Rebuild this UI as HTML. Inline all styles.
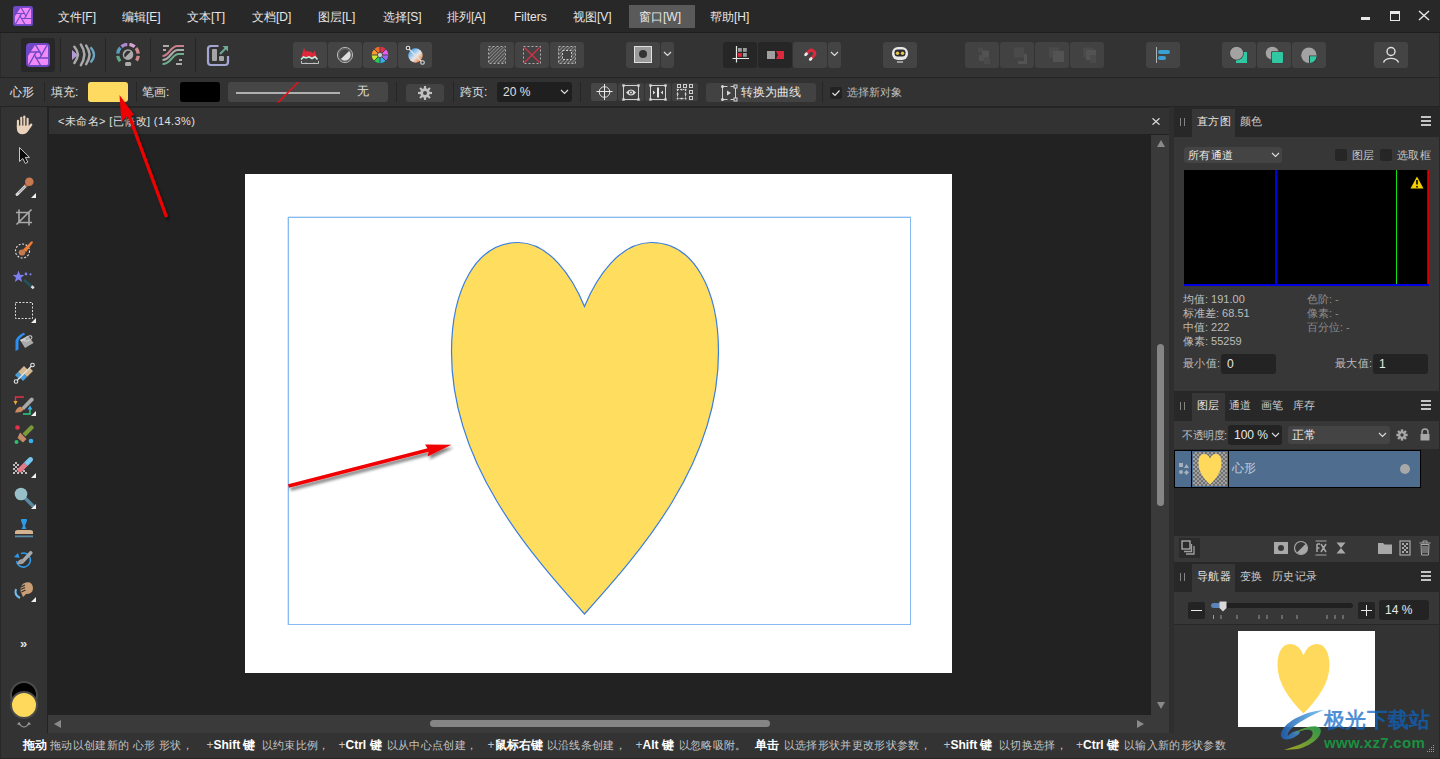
<!DOCTYPE html>
<html><head><meta charset="utf-8">
<style>
*{box-sizing:border-box;margin:0;padding:0}
html,body{width:1440px;height:759px;overflow:hidden;background:#222;font-family:"Liberation Sans",sans-serif;color:#ddd}
.a{position:absolute}
.t{position:absolute;white-space:nowrap;line-height:1}
.btn{position:absolute;background:#444;border-radius:3px}
.sep{position:absolute;width:1px;background:#242424}
</style></head><body>
<!-- MENU BAR -->
<div class="a" style="left:0;top:0;width:1440px;height:32px;background:#282828"></div>
<div class="a" style="left:0;top:32px;width:1440px;height:1px;background:#1e1e1e"></div>
<svg class="a" style="left:13px;top:6px" width="20" height="20" viewBox="0 0 24 24"><defs><clipPath id="lc3"><rect x="2" y="2" width="20" height="20" rx="1.5"/></clipPath></defs><rect x="0" y="0" width="24" height="24" rx="3" fill="#6e47c4"/><g clip-path="url(#lc3)"><rect x="2" y="2" width="20" height="20" fill="#ef8af8"/><path d="M2 2H9L2 13Z" fill="#6e47c4"/><path d="M13.35 15.67L22.60 -0.36" stroke="#6e47c4" stroke-width="1.3"/><path d="M9.50 15.00L28.00 15.00" stroke="#6e47c4" stroke-width="1.3"/><path d="M8.15 11.33L17.40 27.36" stroke="#6e47c4" stroke-width="1.3"/><path d="M10.65 8.33L1.40 24.36" stroke="#6e47c4" stroke-width="1.3"/><path d="M14.50 9.00L-4.00 9.00" stroke="#6e47c4" stroke-width="1.3"/><path d="M15.85 12.67L6.60 -3.36" stroke="#6e47c4" stroke-width="1.3"/></g></svg>
<div id="menu" style="font-size:12px;color:#e6e6e6">
<span class="t" style="left:58px;top:11px">文件[F]</span>
<span class="t" style="left:122px;top:11px">编辑[E]</span>
<span class="t" style="left:187px;top:11px">文本[T]</span>
<span class="t" style="left:252px;top:11px">文档[D]</span>
<span class="t" style="left:318px;top:11px">图层[L]</span>
<span class="t" style="left:383px;top:11px">选择[S]</span>
<span class="t" style="left:447px;top:11px">排列[A]</span>
<span class="t" style="left:514px;top:11px">Filters</span>
<span class="t" style="left:573px;top:11px">视图[V]</span>
<div class="a" style="left:629px;top:5px;width:66px;height:23px;background:#5a5a5a"></div>
<span class="t" style="left:639px;top:11px">窗口[W]</span>
<span class="t" style="left:710px;top:11px">帮助[H]</span>
</div>
<!-- window controls -->
<div class="a" style="left:1361px;top:17px;width:9px;height:3px;background:#e8e8e8"></div>
<div class="a" style="left:1390px;top:11px;width:10px;height:10px;border:1px solid #e8e8e8;border-top-width:3px"></div>
<svg class="a" style="left:1418px;top:10px" width="12" height="11"><path d="M1 1L11 10M11 1L1 10" stroke="#e8e8e8" stroke-width="1.4"/></svg>

<!-- TOOLBAR -->
<div class="a" style="left:0;top:33px;width:1440px;height:44px;background:#333"></div>
<div class="a" style="left:0;top:33px;width:1px;height:44px;background:#2a2a2a"></div>
<div class="a" style="left:1439px;top:33px;width:1px;height:44px;background:#2a2a2a"></div>
<div class="a" style="left:0;top:77px;width:1440px;height:1px;background:#242424"></div>


<!-- TOOLBAR ITEMS -->
<div class="a" style="left:21px;top:38px;width:34px;height:34px;background:#272727;border-radius:3px"></div>
<svg class="a" style="left:26px;top:43px" width="24" height="24" viewBox="0 0 24 24"><defs><clipPath id="lc4"><rect x="2" y="2" width="20" height="20" rx="1.5"/></clipPath></defs><rect x="0" y="0" width="24" height="24" rx="4" fill="#6e47c4"/><g clip-path="url(#lc4)"><rect x="2" y="2" width="20" height="20" fill="#ef8af8"/><path d="M2 2H9L2 13Z" fill="#6e47c4"/><path d="M13.35 15.67L22.60 -0.36" stroke="#6e47c4" stroke-width="1.3"/><path d="M9.50 15.00L28.00 15.00" stroke="#6e47c4" stroke-width="1.3"/><path d="M8.15 11.33L17.40 27.36" stroke="#6e47c4" stroke-width="1.3"/><path d="M10.65 8.33L1.40 24.36" stroke="#6e47c4" stroke-width="1.3"/><path d="M14.50 9.00L-4.00 9.00" stroke="#6e47c4" stroke-width="1.3"/><path d="M15.85 12.67L6.60 -3.36" stroke="#6e47c4" stroke-width="1.3"/></g></svg>
<div class="sep" style="left:60px;top:38px;height:34px"></div>
<svg class="a" style="left:71px;top:43px" width="25" height="24" viewBox="0 0 25 24">
<path d="M1 6.9L6.8 11.9L1 16.9Z" fill="#b39bd9"/>
<path d="M3.4 3.8Q6.5 7.5 7 11.6Q6.5 15.8 3.4 20M9.9 1.6Q12.9 6 13.4 11.6Q12.9 17.5 9.9 22.2M15.2 2.6Q18.2 7 18.6 11.6Q18.2 16.5 15.2 21.1" stroke="#a9a9a9" stroke-width="2.5" fill="none" stroke-linecap="round" stroke-linejoin="round"/>
<path d="M19.5 4.2Q26.5 11.9 19.5 19.6" stroke="#6ba6c2" stroke-width="2.2" fill="none"/>
</svg>
<div class="sep" style="left:105px;top:38px;height:34px"></div>
<svg class="a" style="left:116px;top:43px" width="24" height="24" viewBox="0 0 24 24"><g fill="none" stroke-width="3.3"><path d="M1.74 10.70A10.3 10.3 0 0 1 4.35 4.71" stroke="#5b9bc0"/><path d="M5.52 3.60A10.3 10.3 0 0 1 11.28 1.33" stroke="#b08ad0"/><path d="M13.43 1.40A10.3 10.3 0 0 1 18.62 3.71" stroke="#d8a2d8"/><path d="M20.00 5.12A10.3 10.3 0 0 1 22.26 10.70" stroke="#d0888f"/><path d="M22.22 12.86A10.3 10.3 0 0 1 20.44 17.51" stroke="#d0888f"/><path d="M4.11 18.22A10.3 10.3 0 0 1 1.78 12.86" stroke="#62a98a"/></g><circle cx="12" cy="11.6" r="5.3" fill="#ababab"/><path d="M8.9 14.4L14.7 8.6A4.2 4.2 0 0 0 8.9 14.4Z" fill="#333"/><rect x="9" y="18.9" width="6.2" height="4.1" rx="1.6" fill="#ababab"/></svg>
<div class="sep" style="left:150px;top:38px;height:34px"></div>
<svg class="a" style="left:161px;top:43px" width="24" height="24" viewBox="0 0 24 24">
<path d="M1.5 13C8.5 13 9 3 16.5 3H23" stroke="#c8808a" stroke-width="2.2" fill="none"/>
<path d="M1.5 17C9.5 17 10 7 17 7H23" stroke="#ababab" stroke-width="2.2" fill="none"/>
<path d="M1.5 21C10.5 21 11 11 17.5 11H23" stroke="#6cae8e" stroke-width="2.2" fill="none"/>
<path d="M2 3H8M2 7H5M18 17H21M15 21H21" stroke="#ababab" stroke-width="2"/>
</svg>
<div class="sep" style="left:195px;top:38px;height:34px"></div>
<svg class="a" style="left:206px;top:43px" width="24" height="24" viewBox="0 0 24 24">
<path d="M12.5 3H5A3 3 0 0 0 2 6V19A3 3 0 0 0 5 22H19A3 3 0 0 0 22 19V17" stroke="#a3a6d2" stroke-width="2.2" fill="none"/>
<path d="M22 19V13" stroke="#a3a6d2" stroke-width="2.2"/>
<rect x="6" y="6" width="5" height="12" rx="1" fill="#a5a5a5"/>
<rect x="13" y="13" width="5" height="5" rx="1" fill="#a5a5a5"/>
<path d="M14 11L20.5 4.5" stroke="#6dab95" stroke-width="2"/>
<path d="M16.5 3H22V8.5Z" fill="#6dab95"/>
</svg>

<div class="btn" style="left:293px;top:42px;width:34px;height:26px"></div>
<div class="btn" style="left:328px;top:42px;width:34px;height:26px"></div>
<div class="btn" style="left:363px;top:42px;width:34px;height:26px"></div>
<div class="btn" style="left:398px;top:42px;width:34px;height:26px"></div>
<svg class="a" style="left:300px;top:46px" width="20" height="20" viewBox="0 0 20 20">
<path d="M1.5 11.5L2.5 7L4 1.5L5.5 6L7.5 4.5L9 6L11 5.5L13 7.5L14.5 4.5L16 9L17 12L14 11L11 12.5L8 11L5 12L2 11Z" fill="#e0283b"/>
<path d="M1 13.5L3.5 11L6 12L9 10.8L12 12.5L15 10.8L17.5 13.5" stroke="#bff2e2" stroke-width="1.6" fill="none"/>
<path d="M1.5 15V17.5H18.5V15M6 16.5V17.5M14 16.5V17.5" stroke="#cfcfcf" stroke-width="0.9" fill="none"/>
</svg>
<svg class="a" style="left:336px;top:46px" width="18" height="18" viewBox="0 0 18 18">
<circle cx="9" cy="9" r="7.6" stroke="#b8b8b8" stroke-width="1" fill="none"/>
<circle cx="9" cy="9" r="6.3" stroke="#8a8a8a" stroke-width="0.6" fill="none"/>
<path d="M13.1 4.9A5.8 5.8 0 0 1 4.9 13.1Z" fill="#dcdcdc"/>
</svg>
<svg class="a" style="left:370px;top:45px" width="20" height="20" viewBox="0 0 20 20">
<g transform="translate(10 10)">
<path d="M0 0L0 -8.3A8.3 8.3 0 0 1 5.87 -5.87Z" fill="#e3304a"/>
<path d="M0 0L5.87 -5.87A8.3 8.3 0 0 1 8.3 0Z" fill="#e85cf0"/>
<path d="M0 0L8.3 0A8.3 8.3 0 0 1 5.87 5.87Z" fill="#9a64f6"/>
<path d="M0 0L5.87 5.87A8.3 8.3 0 0 1 0 8.3Z" fill="#30b0f2"/>
<path d="M0 0L0 8.3A8.3 8.3 0 0 1 -5.87 5.87Z" fill="#28c85a"/>
<path d="M0 0L-5.87 5.87A8.3 8.3 0 0 1 -8.3 0Z" fill="#c8e830"/>
<path d="M0 0L-8.3 0A8.3 8.3 0 0 1 -5.87 -5.87Z" fill="#f89a30"/>
<path d="M0 0L-5.87 -5.87A8.3 8.3 0 0 1 0 -8.3Z" fill="#f06a28"/>
<path d="M0 -8.5V8.5M-8.5 0H8.5M-6 -6L6 6M6 -6L-6 6" stroke="#3e3e3e" stroke-width="0.9"/>
<circle r="2.6" fill="#cfcfcf" stroke="#3e3e3e" stroke-width="0.8"/>
</g>
</svg>
<svg class="a" style="left:405px;top:45px" width="20" height="20" viewBox="0 0 20 20">
<defs><linearGradient id="g1" x1="0" y1="0" x2="1" y2="1"><stop offset="0.1" stop-color="#3aa2f0"/><stop offset="0.55" stop-color="#e8e8e8"/><stop offset="0.9" stop-color="#f07830"/></linearGradient></defs>
<circle cx="10.5" cy="10.5" r="7.2" fill="url(#g1)"/>
<path d="M3 3L17.5 17.5" stroke="#e0e0e0" stroke-width="1.3"/>
<circle cx="3" cy="3" r="1.8" fill="#3e3e3e" stroke="#e0e0e0" stroke-width="1.1"/>
<circle cx="17.5" cy="17.5" r="1.8" fill="#3e3e3e" stroke="#e0e0e0" stroke-width="1.1"/>
<circle cx="10.25" cy="10.25" r="0.9" fill="#e0e0e0"/>
</svg>


<div class="btn" style="left:480px;top:42px;width:34px;height:26px;background:#434343"></div>
<div class="btn" style="left:515px;top:42px;width:34px;height:26px;background:#434343"></div>
<div class="btn" style="left:550px;top:42px;width:34px;height:26px;background:#434343"></div>
<svg class="a" style="left:487px;top:45px" width="20" height="20" viewBox="0 0 20 20">
<defs><pattern id="hatch" width="2.5" height="2.5" patternUnits="userSpaceOnUse" patternTransform="rotate(45)"><rect width="1.1" height="2.5" fill="#8a8a8a"/></pattern></defs>
<rect x="2" y="2" width="16" height="16" fill="url(#hatch)"/>
<rect x="1.5" y="1.5" width="17" height="17" fill="none" stroke="#b0b0b0" stroke-width="1" stroke-dasharray="2 2"/>
</svg>
<svg class="a" style="left:522px;top:45px" width="20" height="20" viewBox="0 0 20 20">
<rect x="1.5" y="1.5" width="17" height="17" fill="none" stroke="#b0b0b0" stroke-width="1" stroke-dasharray="2 2"/>
<path d="M2.5 2.5L17.5 17.5M17.5 2.5L2.5 17.5" stroke="#d83048" stroke-width="1.3"/>
</svg>
<svg class="a" style="left:557px;top:45px" width="20" height="20" viewBox="0 0 20 20">
<path d="M1.5 1.5H18.5V18.5H1.5Z M5 5V15H15V5Z" fill="url(#hatch)" fill-rule="evenodd"/>
<rect x="1.5" y="1.5" width="17" height="17" fill="none" stroke="#b0b0b0" stroke-width="1" stroke-dasharray="2 2"/>
<rect x="5.5" y="5.5" width="9" height="9" fill="none" stroke="#d0d0d0" stroke-width="1" stroke-dasharray="2 1.5"/>
</svg>

<div class="btn" style="left:626px;top:42px;width:34px;height:26px"></div>
<div class="btn" style="left:661px;top:42px;width:13px;height:26px"></div>
<div class="a" style="left:634px;top:46px;width:18px;height:17px;background:#9a9a9a;border:1.5px solid #e0e0e0"></div>
<div class="a" style="left:639px;top:50px;width:8px;height:8px;border-radius:50%;background:#333"></div>
<svg class="a" style="left:663px;top:51px" width="9" height="6"><path d="M1 1L4.5 4.5L8 1" stroke="#ddd" stroke-width="1.2" fill="none"/></svg>

<div class="btn" style="left:723px;top:42px;width:34px;height:26px;background:#262626"></div>
<div class="btn" style="left:758px;top:42px;width:34px;height:26px;background:#262626"></div>
<div class="btn" style="left:793px;top:42px;width:34px;height:26px"></div>
<div class="btn" style="left:828px;top:42px;width:13px;height:26px"></div>
<svg class="a" style="left:730px;top:44px" width="22" height="20" viewBox="0 0 22 20">
<rect x="8" y="4" width="3.8" height="3.8" fill="#9c9c9c"/><rect x="13" y="4" width="3.8" height="3.8" fill="#9c9c9c"/>
<rect x="8" y="9" width="3.8" height="3.8" fill="#e0283c"/><rect x="13" y="9" width="3.8" height="3.8" fill="#9c9c9c"/>
<path d="M6.5 2V18.5M2.5 14.5H19" stroke="#e8e8e8" stroke-width="1.2"/>
</svg>
<svg class="a" style="left:765px;top:48px" width="22" height="14" viewBox="0 0 22 14">
<rect x="2" y="3" width="8" height="8" fill="#a0a0a0"/>
<path d="M11 3H19V11H11L13 7Z" fill="#e0283c"/>
</svg>
<svg class="a" style="left:800px;top:44px" width="20" height="20" viewBox="0 0 20 20">
<path d="M6.9 9.43L9.17 7.17A3.3 3.3 0 0 1 13.83 11.83L11.57 14.1" stroke="#e0283c" stroke-width="3" fill="none"/>
<path d="M6.5 9.85L5.6 10.75M11.15 14.5L10.25 15.4" stroke="#eeeeee" stroke-width="2.8" stroke-linecap="round"/>
</svg>
<svg class="a" style="left:830px;top:51px" width="9" height="6"><path d="M1 1L4.5 4.5L8 1" stroke="#ddd" stroke-width="1.2" fill="none"/></svg>

<div class="btn" style="left:883px;top:42px;width:34px;height:26px"></div>
<svg class="a" style="left:890px;top:45px" width="20" height="20" viewBox="0 0 20 20">
<rect x="2" y="2" width="16" height="13" rx="6" fill="#e8e8e8"/>
<rect x="4.5" y="4.5" width="11" height="7" rx="3" fill="#2a2a30"/>
<circle cx="7.5" cy="8.2" r="1.7" fill="#e3c54e"/><circle cx="12.5" cy="8.2" r="1.7" fill="#e3c54e"/>
<rect x="7" y="16" width="6" height="2" fill="#9a9a9a"/>
</svg>

<div class="btn" style="left:965px;top:42px;width:34px;height:26px;background:#424242"></div>
<div class="btn" style="left:1000px;top:42px;width:34px;height:26px;background:#424242"></div>
<div class="btn" style="left:1035px;top:42px;width:34px;height:26px;background:#424242"></div>
<div class="btn" style="left:1070px;top:42px;width:34px;height:26px;background:#424242"></div>
<svg class="a" style="left:970px;top:45px" width="24" height="20" viewBox="0 0 24 20">
<rect x="8" y="2.5" width="5" height="5" fill="#4a4a4a"/><rect x="12" y="5.5" width="7" height="7" fill="#535353"/><rect x="9" y="10" width="6" height="6" fill="#505050"/><rect x="14" y="13" width="6" height="6" fill="#4a4a4a"/>
</svg>
<svg class="a" style="left:1005px;top:45px" width="24" height="20" viewBox="0 0 24 20">
<rect x="9" y="2.5" width="10" height="10" fill="#4a4a4a"/><path d="M19 9H22V19H13V16H19Z" fill="#535353"/>
</svg>
<svg class="a" style="left:1040px;top:45px" width="24" height="20" viewBox="0 0 24 20">
<rect x="9" y="2.5" width="10" height="10" fill="#4a4a4a"/><rect x="13" y="6" width="11" height="11" fill="#535353"/>
</svg>
<svg class="a" style="left:1075px;top:45px" width="24" height="20" viewBox="0 0 24 20">
<rect x="8" y="2.5" width="10" height="10" fill="#4a4a4a"/><rect x="11" y="5" width="10" height="10" fill="#535353"/><rect x="15" y="10" width="6" height="8" fill="#4a4a4a"/>
</svg>

<div class="btn" style="left:1146px;top:42px;width:34px;height:26px"></div>
<div class="a" style="left:1156px;top:47px;width:1px;height:16px;background:#b0b0b0"></div>
<div class="a" style="left:1158px;top:50px;width:12px;height:4px;border-radius:2px;background:#3a9fd2"></div>
<div class="a" style="left:1158px;top:56px;width:8px;height:4px;border-radius:2px;background:#3a9fd2"></div>

<div class="btn" style="left:1222px;top:42px;width:34px;height:26px"></div>
<div class="btn" style="left:1257px;top:42px;width:34px;height:26px"></div>
<div class="btn" style="left:1292px;top:42px;width:34px;height:26px"></div>
<svg class="a" style="left:1226px;top:44px" width="26" height="22" viewBox="0 0 26 22">
<rect x="10" y="8" width="11" height="11" fill="#2fc8a2"/>
<circle cx="10.6" cy="9.2" r="7.2" fill="#3e3e3e"/>
<circle cx="10.6" cy="9.2" r="6.5" fill="#a3a3a3"/>
</svg>
<svg class="a" style="left:1261px;top:44px" width="26" height="22" viewBox="0 0 26 22">
<circle cx="11.3" cy="9.2" r="6.5" fill="#a3a3a3"/>
<rect x="10.2" y="7.2" width="12.6" height="12.6" rx="1.2" fill="#3e3e3e"/>
<rect x="11" y="8" width="11" height="11" rx="1" fill="#2fc8a2"/>
</svg>
<svg class="a" style="left:1296px;top:44px" width="26" height="22" viewBox="0 0 26 22">
<circle cx="12.9" cy="11.2" r="7.7" fill="#a3a3a3"/>
<path d="M13 11.5H21V19H13Z" fill="#3e3e3e"/>
<path d="M14 12.3H20.6A7.7 7.7 0 0 1 14 18.9Z" fill="#2fc8a2"/>
</svg>

<div class="btn" style="left:1374px;top:42px;width:34px;height:26px"></div>
<svg class="a" style="left:1381px;top:45px" width="20" height="20" viewBox="0 0 20 20">
<circle cx="10" cy="6.5" r="4" stroke="#e0e0e0" stroke-width="1.4" fill="none"/>
<path d="M2.5 17.5C4.5 12 15.5 12 17.5 17.5" stroke="#e0e0e0" stroke-width="1.4" fill="none"/>
</svg>

<!-- CONTEXT BAR -->
<div class="a" style="left:0;top:78px;width:1440px;height:28px;background:#323232"></div>
<div class="a" style="left:0;top:106px;width:1440px;height:1px;background:#242424"></div>


<div style="font-size:12px;color:#e0e0e0">
<span class="t" style="left:10px;top:86px">心形</span>
<div class="sep" style="left:44px;top:82px;height:20px;background:#262626"></div>
<span class="t" style="left:51px;top:86px">填充:</span>
<div class="a" style="left:88px;top:82px;width:40px;height:20px;border-radius:3px;background:#fedb60"></div>
<div class="sep" style="left:136px;top:82px;height:20px;background:#262626"></div>
<span class="t" style="left:142px;top:86px">笔画:</span>
<div class="a" style="left:180px;top:82px;width:40px;height:20px;border-radius:3px;background:#000"></div>
<div class="a" style="left:228px;top:82px;width:160px;height:20px;border-radius:3px;background:#464646"></div>
<div class="a" style="left:236px;top:92px;width:104px;height:1.5px;background:#b0b0b0"></div>
<svg class="a" style="left:277px;top:81px" width="23" height="22"><path d="M1 21.5L21.5 1" stroke="#e8101a" stroke-width="1.6"/></svg>
<span class="t" style="left:357px;top:85px">无</span>
<div class="sep" style="left:396px;top:82px;height:20px;background:#262626"></div>
<div class="a" style="left:406px;top:84px;width:38px;height:18px;border-radius:3px;background:#434343"></div>
<svg class="a" style="left:417px;top:85px" width="16" height="16" viewBox="0 0 16 16">
<g transform="translate(8 8)" fill="#c0c0c0">
<circle r="4.8"/>
<rect x="-1.1" y="-7" width="2.2" height="14"/>
<rect x="-1.1" y="-7" width="2.2" height="14" transform="rotate(45)"/>
<rect x="-1.1" y="-7" width="2.2" height="14" transform="rotate(90)"/>
<rect x="-1.1" y="-7" width="2.2" height="14" transform="rotate(135)"/>
<circle r="2" fill="#434343"/>
</g>
</svg>
<div class="sep" style="left:453px;top:82px;height:20px;background:#262626"></div>
<span class="t" style="left:460px;top:86px">跨页:</span>
<div class="a" style="left:497px;top:82px;width:75px;height:20px;border-radius:3px;background:#1f1f1f"></div>
<span class="t" style="left:503px;top:86px">20 %</span>
<svg class="a" style="left:560px;top:89px" width="9" height="6"><path d="M1 1L4.5 4.5L8 1" stroke="#ddd" stroke-width="1.2" fill="none"/></svg>
<div class="sep" style="left:580px;top:82px;height:20px;background:#262626"></div>
<div class="a" style="left:591px;top:83px;width:26px;height:18px;border-radius:2px;background:#464646"></div>
<div class="a" style="left:618px;top:83px;width:26px;height:18px;border-radius:2px;background:#404040"></div>
<div class="a" style="left:645px;top:83px;width:26px;height:18px;border-radius:2px;background:#404040"></div>
<div class="a" style="left:672px;top:83px;width:26px;height:18px;border-radius:2px;background:#404040"></div>
<svg class="a" style="left:591px;top:83px" width="26" height="18" viewBox="0 0 26 18">
<circle cx="13.5" cy="9" r="5.3" stroke="#e0e0e0" stroke-width="1" fill="none"/>
<path d="M13.5 1V17M5.5 8.5H21.5" stroke="#e8e8e8" stroke-width="1"/>
</svg>
<svg class="a" style="left:618px;top:83px" width="26" height="18" viewBox="0 0 26 18">
<path d="M5.5 2.5H20.5V16.5H5.5Z" stroke="#d0d0d0" stroke-width="1" fill="none"/>
<rect x="4.3" y="1.3" width="2.4" height="2.4" fill="#d8d8d8"/><rect x="19.3" y="1.3" width="2.4" height="2.4" fill="#d8d8d8"/><rect x="4.3" y="15.3" width="2.4" height="2.4" fill="#d8d8d8"/><rect x="19.3" y="15.3" width="2.4" height="2.4" fill="#d8d8d8"/>
<path d="M8 9.5Q13 3.5 18 9.5Q13 15.5 8 9.5Z" fill="#e0e0e0"/><circle cx="13" cy="9.5" r="2" fill="#404040"/><circle cx="13" cy="9.5" r="1" fill="#e0e0e0"/>
</svg>
<svg class="a" style="left:645px;top:83px" width="26" height="18" viewBox="0 0 26 18">
<path d="M5.5 2.5H20.5V16.5H5.5Z" stroke="#d0d0d0" stroke-width="1" fill="none"/>
<rect x="4.3" y="1.3" width="2.4" height="2.4" fill="#d8d8d8"/><rect x="19.3" y="1.3" width="2.4" height="2.4" fill="#d8d8d8"/><rect x="4.3" y="15.3" width="2.4" height="2.4" fill="#d8d8d8"/><rect x="19.3" y="15.3" width="2.4" height="2.4" fill="#d8d8d8"/>
<rect x="12" y="4.5" width="2" height="10" fill="#e8e8e8"/><path d="M8 7.5V11.5L10.3 9.5Z M18 7.5V11.5L15.7 9.5Z" fill="#e0e0e0"/>
</svg>
<svg class="a" style="left:672px;top:83px" width="26" height="18" viewBox="0 0 26 18">
<g fill="none" stroke="#cfcfcf" stroke-width="1">
<rect x="5.5" y="1.5" width="3" height="3"/><rect x="11.5" y="1.5" width="3" height="3"/><rect x="17.5" y="1.5" width="3" height="3"/>
<rect x="17.5" y="7.5" width="3" height="3"/><rect x="17.5" y="13.5" width="3" height="3"/>
<rect x="5.5" y="6.5" width="8" height="9" stroke-dasharray="1.5 1.2"/>
</g>
<g fill="#d8d8d8"><rect x="4.8" y="5.8" width="1.6" height="1.6"/><rect x="12.8" y="5.8" width="1.6" height="1.6"/><rect x="4.8" y="14.8" width="1.6" height="1.6"/><rect x="12.8" y="14.8" width="1.6" height="1.6"/><rect x="8.8" y="5.8" width="1.6" height="1.6"/><rect x="8.8" y="14.8" width="1.6" height="1.6"/><rect x="4.8" y="10.3" width="1.6" height="1.6"/><rect x="12.8" y="10.3" width="1.6" height="1.6"/></g>
</svg>
<div class="a" style="left:706px;top:83px;width:110px;height:19px;border-radius:3px;background:#424242"></div>
<svg class="a" style="left:718px;top:83px" width="22" height="20" viewBox="0 0 22 20">
<path d="M4.5 3.5V16.5M4.5 3.5H9.5M4.5 16.5H9.5M17.5 3.5V16.5M17.5 3.5H12.5M17.5 16.5H12.5" stroke="#cfcfcf" stroke-width="1" fill="none"/>
<circle cx="4.5" cy="3.5" r="1.5" fill="#d8d8d8"/><circle cx="4.5" cy="16.5" r="1.5" fill="#d8d8d8"/>
<rect x="16" y="2" width="3" height="3" fill="#424242" stroke="#d8d8d8" stroke-width="1"/><rect x="16" y="15" width="3" height="3" fill="#424242" stroke="#d8d8d8" stroke-width="1"/>
<path d="M9 7.5V12.5L13 10Z" fill="#d8d8d8"/>
</svg>
<span class="t" style="left:741px;top:86px;color:#e8e8e8">转换为曲线</span>
<div class="sep" style="left:822px;top:82px;height:20px;background:#262626"></div>
<div class="a" style="left:830px;top:87px;width:12px;height:12px;border-radius:2px;background:#222"></div>
<svg class="a" style="left:831px;top:88px" width="10" height="10"><path d="M1.5 5L4 7.5L8.5 2.5" stroke="#e0e0e0" stroke-width="1.2" fill="none"/></svg>
<span class="t" style="left:847px;top:87px;color:#bdbdbd;font-size:11px">选择新对象</span>
</div>

<!-- TOOLS PANEL -->
<div class="a" style="left:0;top:107px;width:47px;height:626px;background:#333"></div>
<div class="a" style="left:47px;top:107px;width:2px;height:28px;background:#222"></div>

<svg class="a" style="left:12px;top:112px" width="24" height="24" viewBox="0 0 24 24"><g stroke="#ead2bb" stroke-width="2.3" stroke-linecap="round"><path d="M6 9V15M9.35 5.8V14M12.3 4.7V14M15.5 6.8V15"/></g><path d="M4.85 13.5V16.5Q5 22.3 10.5 22.3Q14 22.3 16.2 19L20.3 13.3A1.3 1.3 0 0 0 18.3 11.8L16.6 14.2V13.5Z" fill="#ead2bb"/><path d="M7.7 8V13.5M10.85 6V13.5M13.9 6V13.5" stroke="#323232" stroke-width="0.7"/></svg>
<svg class="a" style="left:12px;top:143px" width="24" height="24" viewBox="0 0 24 24"><path d="M7.5 4.5V18.5L10.8 15.5L13.3 20.5L15.8 19.2L13.3 14.4H17.5Z" fill="#0a0a0a" stroke="#c8c8c8" stroke-width="1" stroke-linejoin="round"/></svg>
<svg class="a" style="left:12px;top:174px" width="24" height="24" viewBox="0 0 24 24"><path d="M5 20.5L14.5 11" stroke="#d8d8d8" stroke-width="3" stroke-linecap="round"/><path d="M6.5 19L13 12.5" stroke="#8a8a8a" stroke-width="1"/><circle cx="17.3" cy="7.8" r="4.3" fill="#c97a52"/><path d="M13 10L15 12.5" stroke="#a05a38" stroke-width="2"/><path d="M24 19V24H19Z" fill="#f0f0f0"/></svg>
<svg class="a" style="left:12px;top:205px" width="24" height="24" viewBox="0 0 24 24"><path d="M7 4.5V17.5H20M4 7.5H17V20.5M4.5 19.5L19.5 4.5" stroke="#a9a9a9" stroke-width="1.6" fill="none"/></svg>
<svg class="a" style="left:12px;top:237px" width="24" height="24" viewBox="0 0 24 24"><circle cx="10.5" cy="14" r="7" stroke="#e6e6e6" stroke-width="1.1" stroke-dasharray="2 1.6" fill="none"/><path d="M11 12.5L19.5 4.2A1.5 1.5 0 0 1 21 5.5L14 15Z" fill="#f07d30"/><ellipse cx="10" cy="15.5" rx="3.3" ry="3" fill="#c47a50"/></svg>
<svg class="a" style="left:12px;top:267px" width="24" height="24" viewBox="0 0 24 24"><path d="M12 13L21.5 21" stroke="#24535e" stroke-width="2.6"/><path d="M19.5 19.3L21.8 21.3" stroke="#e0e0e0" stroke-width="2.6"/><path d="M6.5 3.5L8 7.8L12.3 8L9 10.8L10.2 15L6.5 12.6L2.8 15L4 10.8L0.8 8L5 7.8Z" fill="#7d7ff0"/><circle cx="14" cy="7" r="1.4" fill="#7d7ff0"/><circle cx="18.5" cy="7.3" r="1.1" fill="#7d7ff0"/></svg>
<svg class="a" style="left:12px;top:299px" width="24" height="24" viewBox="0 0 24 24"><rect x="3.5" y="3.5" width="17" height="16" stroke="#d8d8d8" stroke-width="1" stroke-dasharray="2 1.5" fill="none"/><path d="M24 19V24H19Z" fill="#f0f0f0"/></svg>
<svg class="a" style="left:12px;top:330px" width="24" height="24" viewBox="0 0 24 24"><path d="M3.5 21V10.5Q5 6 12 2.5L13 4.5Q8 7 6.5 11V19.5Z" fill="#2f8ff0"/><path d="M8 10L16.5 6L21.5 13L13 18Z" fill="#a9a9a9"/><path d="M8 10L12.5 8L14 9.5L9.5 11.5Z" fill="#d0d0d0"/><ellipse cx="16" cy="8.5" rx="4.2" ry="2" stroke="#cfcfcf" stroke-width="1" fill="none" transform="rotate(-25 16 8.5)"/></svg>
<svg class="a" style="left:12px;top:361px" width="24" height="24" viewBox="0 0 24 24"><path d="M6 11L12 5L16 9L10 15Z" fill="#d4b88f"/><path d="M3 14L6 11L10 15L7 18Z" fill="#4a9dd8"/><path d="M12 13L18 7L21 10L15 16Z" fill="#d4b88f"/><path d="M8 17L12 13L15 16L11 20Z" fill="#4a9dd8"/><path d="M4.5 20L20 4.5" stroke="#e6e6e6" stroke-width="1.2"/><circle cx="4" cy="20.5" r="1.8" fill="#333" stroke="#e6e6e6" stroke-width="1.1"/><circle cx="20.5" cy="4" r="1.8" fill="#333" stroke="#e6e6e6" stroke-width="1.1"/></svg>
<svg class="a" style="left:12px;top:392px" width="24" height="24" viewBox="0 0 24 24"><path d="M3.5 9.5V5H12" stroke="#e5324a" stroke-width="1.4" fill="none"/><path d="M1.5 9H5.5L3.5 13Z" fill="#f0a830"/><path d="M9 16L18.5 6A2 2 0 0 1 21.5 8.5L12 18Z" fill="#a9a9a9"/><path d="M3 20.5Q4.5 15.5 8.5 14.5L11.5 17.5Q10 21 3 20.5Z" fill="#c98a62"/><path d="M11 22H18V17" stroke="#28d088" stroke-width="1.4" fill="none"/><path d="M15.5 17.5H20.5L18 13.5Z" fill="#38b0f0"/><path d="M24 19V24H19Z" fill="#f0f0f0"/></svg>
<svg class="a" style="left:12px;top:423px" width="24" height="24" viewBox="0 0 24 24"><path d="M10.5 10.5L18.5 2.5A2.3 2.3 0 0 1 21.5 5.5L13.5 13.5Z" fill="#7a9a3c"/><path d="M8 9.5L14.5 16L11 19.5L5.5 15Z" fill="#c48c68"/><circle cx="5.5" cy="4.5" r="2.3" fill="#e5324a"/><circle cx="4.5" cy="19" r="2" fill="#2ec070"/><circle cx="19" cy="18" r="2.3" fill="#38b0f0"/></svg>
<svg class="a" style="left:12px;top:454px" width="24" height="24" viewBox="0 0 24 24"><g fill="#bdbdbd"><rect x="1" y="10" width="2" height="2"/><rect x="5" y="10" width="2" height="2"/><rect x="3" y="12" width="2" height="2"/><rect x="1" y="14" width="2" height="2"/><rect x="5" y="14" width="2" height="2"/><rect x="3" y="16" width="2" height="2"/><rect x="7" y="16" width="2" height="2"/><rect x="1" y="18" width="2" height="2"/><rect x="5" y="18" width="2" height="2"/><rect x="9" y="18" width="2" height="2"/><rect x="3" y="8" width="2" height="2"/><rect x="13" y="18" width="2" height="2"/><rect x="11" y="16" width="2" height="2"/></g><path d="M6 14.5L12 8.5L15.5 12L9.5 18A2.5 2.5 0 0 1 6 14.5Z" fill="#e47a88"/><path d="M12 8.5L17 3.5A2.5 2.5 0 0 1 20.5 7L15.5 12Z" fill="#78c8f0"/><path d="M24 19V24H19Z" fill="#f0f0f0"/></svg>
<svg class="a" style="left:12px;top:485px" width="24" height="24" viewBox="0 0 24 24"><path d="M12.5 12.5L20.5 20.5" stroke="#5a8aa4" stroke-width="3.5" stroke-linecap="round"/><circle cx="9" cy="9" r="6.3" fill="#98c0c8"/><path d="M24 19V24H19Z" fill="#f0f0f0"/></svg>
<svg class="a" style="left:12px;top:516px" width="24" height="24" viewBox="0 0 24 24"><path d="M9.5 3.5H14.5V6L13 10L14.5 13H9.5L11 10L9.5 6Z" fill="#2c9ae8"/><rect x="9" y="3" width="6" height="2.5" rx="1" fill="#2c9ae8"/><path d="M3 16Q3 14 6 14H18Q21 14 21 16V18H3Z" fill="#d4b48e"/><rect x="3" y="19.5" width="18" height="1.8" fill="#5a8aa4"/></svg>
<svg class="a" style="left:12px;top:547px" width="24" height="24" viewBox="0 0 24 24"><path d="M4.5 14A7 7 0 1 0 9 6.5" stroke="#2c9ae8" stroke-width="1.6" fill="none"/><path d="M2 10L6 6L7.5 11Z" fill="#2c9ae8"/><path d="M10 12.5L18 4A2 2 0 0 1 20.5 6.5L12.5 15Z" fill="#a9a9a9"/><path d="M5 17Q6 12.5 10 12L12.5 14.5Q12 18 5 17Z" fill="#a0a0a0"/></svg>
<svg class="a" style="left:12px;top:578px" width="24" height="24" viewBox="0 0 24 24"><path d="M9 14L15 8" stroke="#c9a07a" stroke-width="0"/><path d="M8.5 13Q8 6 14 4.5Q20.5 3.5 21 10Q21 16 14 16L11 19Z" fill="#c99e76"/><path d="M9 9L13 7M8.5 11.5L13 9.5M9.5 14L13.5 12" stroke="#303030" stroke-width="1.2"/><path d="M4 11Q2 17 8 20" stroke="#6ec0f0" stroke-width="2" fill="none"/><path d="M24 19V24H19Z" fill="#f0f0f0"/></svg>
<span class="t" style="left:20px;top:637px;font-size:13px;color:#e0e0e0;font-weight:bold">»</span>
<div class="a" style="left:10px;top:681px;width:28px;height:28px;border-radius:50%;background:#000;border:2px solid #4a4a4a"></div>
<div class="a" style="left:10px;top:691px;width:28px;height:28px;border-radius:50%;background:#fed95c;border:2px solid #4a4a4a"></div>
<svg class="a" style="left:16px;top:721px" width="16" height="8"><path d="M3 2.5Q8 9.5 13 2.5" stroke="#9a9a9a" stroke-width="1.1" fill="none"/><path d="M1 3.5L3.2 0.8L4.8 3.8Z M11.2 3.8L12.8 0.8L15 3.5Z" fill="#9a9a9a"/></svg>

<!-- DOC TAB -->
<div class="a" style="left:49px;top:108px;width:1120px;height:26px;background:#323232"></div><div class="a" style="left:48px;top:107px;width:1121px;height:1px;background:#242424"></div>

<span class="t" style="left:58px;top:116px;font-size:11px;letter-spacing:0.4px;color:#e0e0e0">&lt;未命名&gt; [已修改] (14.3%)</span>
<svg class="a" style="left:1152px;top:118px" width="8" height="7"><path d="M0.5 0.3L7.5 6.7M7.5 0.3L0.5 6.7" stroke="#e0e0e0" stroke-width="1.2"/></svg>

<!-- CANVAS -->
<div class="a" style="left:48px;top:135px;width:1103px;height:580px;background:#222"></div>
<!-- v scrollbar -->
<div class="a" style="left:1151px;top:135px;width:18px;height:580px;background:#3a3a3a"></div>
<!-- h scrollbar -->
<div class="a" style="left:48px;top:715px;width:1121px;height:18px;background:#3a3a3a"></div>
<div class="a" style="left:1169px;top:107px;width:5px;height:626px;background:#2e2e2e"></div>


<!-- PAGE -->
<div class="a" style="left:245px;top:174px;width:707px;height:499px;background:#fff"></div>
<div class="a" style="left:288px;top:217px;width:623px;height:408px;border:1px solid #86bbee;box-shadow:-1px 0 0 rgba(134,187,238,0.35), 0 -1px 0 rgba(134,187,238,0.35)"></div>
<svg class="a" style="left:440px;top:230px" width="300" height="400" viewBox="440 230 300 400">
<path d="M584.5 306.5C597 276 620 242.5 651.5 242.5C694 242.5 718.5 290 718.5 352C718.5 464 640 552 584.5 614C529 552 451.5 464 451.5 352C451.5 290 476 242.5 518 242.5C549 242.5 572 276 584.5 306.5Z" fill="#ffdd5f" stroke="#3a7ee0" stroke-width="1.2"/>
</svg>
<!-- arrows -->
<svg class="a" style="left:0;top:0" width="1440" height="759">
<defs><filter id="sh" x="-20%" y="-20%" width="140%" height="140%"><feGaussianBlur in="SourceAlpha" stdDeviation="1.5"/><feOffset dx="2" dy="3"/><feComponentTransfer><feFuncA type="linear" slope="0.5"/></feComponentTransfer><feMerge><feMergeNode/><feMergeNode in="SourceGraphic"/></feMerge></filter></defs>
<g filter="url(#sh)">
<path d="M288.5 486L432 449" stroke="#f00000" stroke-width="3.5"/>
<path d="M451.5 444.8L425 444.5L429 450.5L427.5 456.5Z" fill="#f00000"/>
</g>
<g filter="url(#sh)">
<path d="M166.5 217L127 110" stroke="#f00000" stroke-width="3.2"/>
<path d="M119.5 95L121.5 122L126.5 116.5L134 115Z" fill="#f00000"/>
</g>
</svg>
<!-- scrollbar details -->
<svg class="a" style="left:1157px;top:140px" width="8" height="8"><path d="M0 7H8L4 0Z" fill="#8a8a8a"/></svg>
<div class="a" style="left:1157px;top:344px;width:7px;height:162px;border-radius:3.5px;background:#858585"></div>
<svg class="a" style="left:1157px;top:702px" width="8" height="8"><path d="M0 0H8L4 7Z" fill="#8a8a8a"/></svg>
<svg class="a" style="left:54px;top:720px" width="8" height="8"><path d="M7 0V8L0 4Z" fill="#8a8a8a"/></svg>
<div class="a" style="left:430px;top:720px;width:340px;height:7px;border-radius:3.5px;background:#858585"></div>
<svg class="a" style="left:1137px;top:720px" width="8" height="8"><path d="M0 0V8L7 4Z" fill="#8a8a8a"/></svg>

<!-- RIGHT PANEL -->
<div class="a" style="left:1174px;top:107px;width:266px;height:626px;background:#373737"></div>


<div style="font-size:12px;color:#e0e0e0">
<!-- histogram panel -->
<div class="a" style="left:1174px;top:107px;width:265px;height:30px;background:#282828"></div>
<div class="a" style="left:1180px;top:118px;width:1px;height:8px;background:#858585"></div>
<div class="a" style="left:1184px;top:118px;width:1px;height:8px;background:#858585"></div>
<div class="a" style="left:1192px;top:109px;width:43px;height:28px;background:#373737"></div>
<span class="t" style="left:1197px;top:116px;font-size:11px;letter-spacing:0.4px;color:#e8e8e8">直方图</span>
<span class="t" style="left:1240px;top:116px;font-size:11px;letter-spacing:0.4px;color:#c8c8c8">颜色</span>
<div class="a" style="left:1421px;top:116px;width:10px;height:2px;background:#c4c4c4"></div>
<div class="a" style="left:1421px;top:120px;width:10px;height:2px;background:#c4c4c4"></div>
<div class="a" style="left:1421px;top:124px;width:10px;height:2px;background:#c4c4c4"></div>
<div class="a" style="left:1184px;top:147px;width:98px;height:16px;border-radius:3px;background:#444"></div>
<span class="t" style="left:1188px;top:150px;color:#e8e8e8;font-size:11px;letter-spacing:0.4px">所有通道</span>
<svg class="a" style="left:1271px;top:152px" width="9" height="6"><path d="M1 1L4.5 4.5L8 1" stroke="#ddd" stroke-width="1.1" fill="none"/></svg>
<div class="a" style="left:1335px;top:149px;width:12px;height:12px;border-radius:2px;background:#262626"></div>
<span class="t" style="left:1352px;top:150px;color:#c8c8c8;font-size:11px;letter-spacing:0.3px">图层</span>
<div class="a" style="left:1380px;top:149px;width:12px;height:12px;border-radius:2px;background:#262626"></div>
<span class="t" style="left:1397px;top:150px;color:#c8c8c8;font-size:11px;letter-spacing:0.3px">选取框</span>
<div class="a" style="left:1184px;top:170px;width:245px;height:116px;background:#000"></div>
<div class="a" style="left:1184px;top:284px;width:245px;height:2px;background:#0000e0"></div>
<div class="a" style="left:1275px;top:170px;width:2px;height:116px;background:#0000e0"></div>
<div class="a" style="left:1396px;top:170px;width:1px;height:114px;background:#10e010"></div>
<div class="a" style="left:1427px;top:170px;width:1px;height:114px;background:#a00000"></div>
<div class="a" style="left:1428px;top:170px;width:1px;height:114px;background:#d80000"></div>
<svg class="a" style="left:1410px;top:176px" width="14" height="13"><path d="M7 0.5L13.5 12.5H0.5Z" fill="#f2d000"/><path d="M7 4V8.5M7 10V11.5" stroke="#000" stroke-width="1.6"/></svg>
<div style="font-size:11px;color:#bdbdbd">
<span class="t" style="left:1183px;top:294px">均值: 191.00</span>
<span class="t" style="left:1183px;top:308px">标准差: 68.51</span>
<span class="t" style="left:1183px;top:322px">中值: 222</span>
<span class="t" style="left:1183px;top:336px">像素: 55259</span>
<span class="t" style="left:1307px;top:294px;color:#8c8c8c">色阶: -</span>
<span class="t" style="left:1307px;top:308px;color:#8c8c8c">像素: -</span>
<span class="t" style="left:1307px;top:322px;color:#8c8c8c">百分位: -</span>
<span class="t" style="left:1183px;top:358px;font-size:11px;letter-spacing:0.3px">最小值:</span>
<span class="t" style="left:1335px;top:358px;font-size:11px;letter-spacing:0.3px">最大值:</span>
</div>
<div class="a" style="left:1221px;top:354px;width:55px;height:20px;border-radius:3px;background:#232323"></div>
<span class="t" style="left:1227px;top:358px;color:#e8e8e8">0</span>
<div class="a" style="left:1373px;top:354px;width:55px;height:20px;border-radius:3px;background:#232323"></div>
<span class="t" style="left:1379px;top:358px;color:#e8e8e8">1</span>

<!-- gap -->

<!-- layers panel -->
<div class="a" style="left:1174px;top:391px;width:265px;height:30px;background:#282828"></div>
<div class="a" style="left:1180px;top:402px;width:1px;height:8px;background:#858585"></div>
<div class="a" style="left:1184px;top:402px;width:1px;height:8px;background:#858585"></div>
<div class="a" style="left:1192px;top:393px;width:33px;height:28px;background:#373737"></div>
<span class="t" style="left:1197px;top:400px;font-size:11px;letter-spacing:0.4px;color:#e8e8e8">图层</span>
<span class="t" style="left:1229px;top:400px;font-size:11px;letter-spacing:0.4px;color:#c8c8c8">通道</span>
<span class="t" style="left:1261px;top:400px;font-size:11px;letter-spacing:0.4px;color:#c8c8c8">画笔</span>
<span class="t" style="left:1293px;top:400px;font-size:11px;letter-spacing:0.4px;color:#c8c8c8">库存</span>
<div class="a" style="left:1421px;top:400px;width:10px;height:2px;background:#c4c4c4"></div>
<div class="a" style="left:1421px;top:404px;width:10px;height:2px;background:#c4c4c4"></div>
<div class="a" style="left:1421px;top:408px;width:10px;height:2px;background:#c4c4c4"></div>
<span class="t" style="left:1182px;top:430px;font-size:11px;color:#bdbdbd;letter-spacing:-0.5px">不透明度:</span>
<div class="a" style="left:1228px;top:425px;width:54px;height:20px;border-radius:3px;background:#232323"></div>
<span class="t" style="left:1234px;top:429px;color:#e8e8e8">100 %</span>
<svg class="a" style="left:1271px;top:432px" width="9" height="6"><path d="M1 1L4.5 4.5L8 1" stroke="#ddd" stroke-width="1.1" fill="none"/></svg>
<div class="a" style="left:1288px;top:426px;width:102px;height:18px;border-radius:3px;background:#444"></div>
<span class="t" style="left:1292px;top:429px;color:#e8e8e8">正常</span>
<svg class="a" style="left:1378px;top:432px" width="9" height="6"><path d="M1 1L4.5 4.5L8 1" stroke="#ddd" stroke-width="1.1" fill="none"/></svg>
<svg class="a" style="left:1396px;top:429px" width="12" height="12" viewBox="0 0 16 16">
<g transform="translate(8 8)" fill="#a8a8a8"><circle r="5"/><rect x="-1.6" y="-7.5" width="3.2" height="15"/><rect x="-1.6" y="-7.5" width="3.2" height="15" transform="rotate(45)"/><rect x="-1.6" y="-7.5" width="3.2" height="15" transform="rotate(90)"/><rect x="-1.6" y="-7.5" width="3.2" height="15" transform="rotate(135)"/><circle r="2.2" fill="#373737"/></g></svg>
<svg class="a" style="left:1420px;top:428px" width="10" height="13"><path d="M2 6V4A3 3 0 0 1 8 4V6" stroke="#a8a8a8" stroke-width="1.5" fill="none"/><rect x="0.5" y="6" width="9" height="6.5" fill="#a8a8a8"/></svg>
<!-- layer list -->
<div class="a" style="left:1174px;top:449px;width:265px;height:87px;background:#292929"></div>
<div class="a" style="left:1174px;top:450px;width:247px;height:38px;background:#000"></div>
<div class="a" style="left:1175px;top:451px;width:16px;height:36px;background:#4f6d8f"></div>
<div class="a" style="left:1192px;top:451px;width:36px;height:36px;background:#4f6d8f"></div>
<div class="a" style="left:1229px;top:451px;width:191px;height:36px;background:#4f6d8f"></div>
<svg class="a" style="left:1178px;top:462px" width="12" height="14"><rect x="1" y="1" width="4" height="4" fill="#a5b0bc"/><path d="M8.5 2L11 6H6Z" fill="#a5b0bc"/><circle cx="3" cy="10" r="2" fill="#a5b0bc"/><path d="M8.5 8L11 10.5L8.5 13L6 10.5Z" fill="#a5b0bc"/></svg>
<svg class="a" style="left:1193px;top:452px" width="34" height="34">
<defs><pattern id="chk" width="4" height="4" patternUnits="userSpaceOnUse"><rect width="4" height="4" fill="#a0a0a0"/><rect width="2" height="2" fill="#707070"/><rect x="2" y="2" width="2" height="2" fill="#707070"/></pattern></defs>
<rect width="34" height="34" fill="url(#chk)"/>
<path d="M17 6.5C18.5 3 20.5 2 23 2C27 2 28.5 6 28.5 11C28.5 19 24 26 17 32.5C10 26 5.5 19 5.5 11C5.5 6 7 2 11 2C13.5 2 15.5 3 17 6.5Z" fill="#fed95c"/>
</svg>
<span class="t" style="left:1232px;top:462px;color:#c4ccd6">心形</span>
<div class="a" style="left:1400px;top:464px;width:10px;height:10px;border-radius:50%;background:#a8a8a8"></div>
<!-- layers bottom toolbar -->
<div class="a" style="left:1174px;top:536px;width:265px;height:26px;background:#373737"></div>
<div class="a" style="left:1179px;top:538px;width:21px;height:20px;background:#2b2b2b"></div>
<svg class="a" style="left:1181px;top:540px" width="16" height="16"><rect x="1" y="1" width="8" height="8" fill="none" stroke="#b0b0b0" stroke-width="1.3"/><path d="M10.5 4V11.5H3" stroke="#a0a0a0" stroke-width="1.3" fill="none"/><path d="M13 6V14H5" stroke="#a0a0a0" stroke-width="1.3" fill="none"/></svg>
<svg class="a" style="left:1273px;top:541px" width="16" height="14"><rect x="1" y="1" width="14" height="12" fill="#a8a8a8"/><circle cx="8" cy="7" r="3" fill="#373737"/></svg>
<svg class="a" style="left:1293px;top:540px" width="16" height="16"><circle cx="8" cy="8" r="6.5" stroke="#a8a8a8" stroke-width="1.2" fill="none"/><path d="M12.5 4A5.5 5.5 0 0 1 4 12.5Z" fill="#a8a8a8"/></svg>
<svg class="a" style="left:1315px;top:540px" width="12" height="16"><path d="M0.5 1H11.5M0.5 15H11.5" stroke="#a8a8a8" stroke-width="1"/><path d="M2 4V12M2 4H5M2 8H4.5M6 4L11 12M11 4L6 12" stroke="#a8a8a8" stroke-width="1.5" fill="none"/></svg>
<svg class="a" style="left:1336px;top:542px" width="10" height="12"><path d="M0.5 0.5H9.5L5 6L9.5 11.5H0.5L5 6Z" fill="#a8a8a8"/></svg>
<svg class="a" style="left:1377px;top:541px" width="16" height="14"><path d="M1 2H6L7.5 3.5H15V13H1Z" fill="#a8a8a8"/></svg>
<svg class="a" style="left:1399px;top:540px" width="12" height="16"><rect x="1" y="1" width="10" height="14" fill="none" stroke="#a8a8a8" stroke-width="1.2"/><g fill="#a8a8a8"><rect x="3" y="3" width="2" height="2"/><rect x="7" y="3" width="2" height="2"/><rect x="5" y="5" width="2" height="2"/><rect x="3" y="7" width="2" height="2"/><rect x="7" y="7" width="2" height="2"/><rect x="5" y="9" width="2" height="2"/><rect x="3" y="11" width="2" height="2"/><rect x="7" y="11" width="2" height="2"/></g></svg>
<svg class="a" style="left:1419px;top:540px" width="12" height="16"><path d="M0.5 3H11.5M4 3V1H8V3" stroke="#a8a8a8" stroke-width="1" fill="none"/><path d="M2 4.5L2.5 15H9.5L10 4.5Z M4 6V13M6 6V13M8 6V13" stroke="#a8a8a8" stroke-width="1" fill="none"/></svg>

<!-- navigator panel -->
<div class="a" style="left:1174px;top:562px;width:265px;height:30px;background:#282828"></div>
<div class="a" style="left:1180px;top:573px;width:1px;height:8px;background:#858585"></div>
<div class="a" style="left:1184px;top:573px;width:1px;height:8px;background:#858585"></div>
<div class="a" style="left:1192px;top:564px;width:43px;height:28px;background:#373737"></div>
<span class="t" style="left:1197px;top:571px;font-size:11px;letter-spacing:0.4px;color:#e8e8e8">导航器</span>
<span class="t" style="left:1240px;top:571px;font-size:11px;letter-spacing:0.4px;color:#c8c8c8">变换</span>
<span class="t" style="left:1272px;top:571px;font-size:11px;letter-spacing:0.4px;color:#c8c8c8">历史记录</span>
<div class="a" style="left:1421px;top:571px;width:10px;height:2px;background:#c4c4c4"></div>
<div class="a" style="left:1421px;top:575px;width:10px;height:2px;background:#c4c4c4"></div>
<div class="a" style="left:1421px;top:579px;width:10px;height:2px;background:#c4c4c4"></div>
<div class="a" style="left:1188px;top:602px;width:17px;height:17px;border-radius:2px;background:#232323"></div>
<div class="a" style="left:1191px;top:610px;width:11px;height:1px;background:#e8e8e8"></div>
<div class="a" style="left:1211px;top:603px;width:142px;height:5px;border-radius:2.5px;background:#202020"></div>
<div class="a" style="left:1211px;top:603px;width:12px;height:5px;border-radius:2.5px;background:#5a84b8"></div>
<svg class="a" style="left:1219px;top:601px" width="8" height="11"><path d="M0.5 0.5H7.5V7L4 10.5L0.5 7Z" fill="#d8d8d8"/></svg>
<svg class="a" style="left:1210px;top:614px" width="145" height="6"><g stroke="#9a9a9a" stroke-width="1"><path d="M3.5 1V5M11 1V5M27 1V5M49 1V5M57 1V5M72 1V5M87 1V5M117 1V5M125 1V5M133 1V5M148 1V5"/></g></svg>
<div class="a" style="left:1358px;top:602px;width:17px;height:17px;border-radius:2px;background:#232323"></div>
<div class="a" style="left:1361px;top:610px;width:11px;height:1px;background:#e8e8e8"></div>
<div class="a" style="left:1366px;top:605px;width:1px;height:11px;background:#e8e8e8"></div>
<div class="a" style="left:1379px;top:600px;width:50px;height:20px;border-radius:3px;background:#232323"></div>
<span class="t" style="left:1385px;top:604px;color:#e8e8e8">14 %</span>
<div class="a" style="left:1174px;top:624px;width:265px;height:1px;background:#282828"></div>
<div class="a" style="left:1174px;top:625px;width:265px;height:108px;background:#333"></div>
<div class="a" style="left:1238px;top:631px;width:137px;height:96px;background:#fff"></div>
<svg class="a" style="left:1276px;top:642px" width="56" height="74" viewBox="0 0 56 74">
<path d="M27.5 13.5C30 7 34 2 41 2C49 2 53.5 11 53.5 23C53.5 41 42 57 27.5 71.5C13 57 1.5 41 1.5 23C1.5 11 6 2 14 2C21 2 25 7 27.5 13.5Z" fill="#fed95c"/>
</svg>
</div>
<div class="a" style="left:1439px;top:107px;width:1px;height:626px;background:#262626"></div>

<!-- STATUS BAR -->
<div class="a" style="left:0;top:733px;width:1440px;height:26px;background:#333"></div>
<div style="font-size:12px">
<span class="t" style="left:22.5px;top:739px;color:#ffffff;font-weight:bold">拖动</span>
<span class="t" style="left:50px;top:740px;color:#c4c4c4;font-size:11px;letter-spacing:0.35px">拖动以创建新的 心形 形状，</span>
<span class="t" style="left:206.5px;top:739px;color:#c4c4c4">+</span>
<span class="t" style="left:213.5px;top:739px;color:#ffffff;font-weight:bold">Shift 键</span>
<span class="t" style="left:261.5px;top:740px;color:#c4c4c4;font-size:11px;letter-spacing:0.35px">以约束比例，</span>
<span class="t" style="left:338.5px;top:739px;color:#c4c4c4">+</span>
<span class="t" style="left:345.5px;top:739px;color:#ffffff;font-weight:bold">Ctrl 键</span>
<span class="t" style="left:386.5px;top:740px;color:#c4c4c4;font-size:11px;letter-spacing:0.35px">以从中心点创建，</span>
<span class="t" style="left:487.5px;top:739px;color:#c4c4c4">+</span>
<span class="t" style="left:494.5px;top:739px;color:#ffffff;font-weight:bold">鼠标右键</span>
<span class="t" style="left:546.5px;top:740px;color:#c4c4c4;font-size:11px;letter-spacing:0.35px">以沿线条创建，</span>
<span class="t" style="left:635.5px;top:739px;color:#c4c4c4">+</span>
<span class="t" style="left:642.5px;top:739px;color:#ffffff;font-weight:bold">Alt 键</span>
<span class="t" style="left:678.5px;top:740px;color:#c4c4c4;font-size:11px;letter-spacing:0.35px">以忽略吸附。</span>
<span class="t" style="left:755px;top:739px;color:#ffffff;font-weight:bold">单击</span>
<span class="t" style="left:783.5px;top:740px;color:#c4c4c4;font-size:11px;letter-spacing:0.35px">以选择形状并更改形状参数，</span>
<span class="t" style="left:943.5px;top:739px;color:#c4c4c4">+</span>
<span class="t" style="left:950.5px;top:739px;color:#ffffff;font-weight:bold">Shift 键</span>
<span class="t" style="left:999px;top:740px;color:#c4c4c4;font-size:11px;letter-spacing:0.35px">以切换选择，</span>
<span class="t" style="left:1076px;top:739px;color:#c4c4c4">+</span>
<span class="t" style="left:1083px;top:739px;color:#ffffff;font-weight:bold">Ctrl 键</span>
<span class="t" style="left:1124px;top:740px;color:#c4c4c4;font-size:11px;letter-spacing:0.35px">以输入新的形状参数</span>
</div>
<!-- watermark -->
<svg class="a" style="left:1278px;top:707px" width="50" height="45" viewBox="0 0 50 45">
<defs><linearGradient id="wb" x1="0" y1="0" x2="1" y2="0"><stop offset="0" stop-color="#1f5fb0"/><stop offset="1" stop-color="#70c0f0"/></linearGradient>
<linearGradient id="wg" x1="1" y1="0" x2="0" y2="1"><stop offset="0" stop-color="#2aa050"/><stop offset="1" stop-color="#b0b020"/></linearGradient></defs>
<path d="M46 3C30 4 12 12 5 22C0 29 4 34 12 32C18 30 24 26 21 24C18 23 12 26 10 29C8 24 20 14 46 3Z" fill="url(#wb)" opacity="0.9"/>
<path d="M42 21C46 27 36 38 20 42L6 43C22 38 38 32 34 24C30 21 20 24 15 28C20 22 36 16 42 21Z" fill="url(#wg)" opacity="0.9"/>
</svg>
<span class="t" style="left:1324px;top:710px;font-size:20.5px;font-weight:bold;color:rgba(12,100,196,0.72);letter-spacing:0.3px">极光下载站</span>
<span class="t" style="left:1324px;top:735px;font-size:15px;font-weight:bold;color:#1a9040;letter-spacing:0.3px">www.xz7.com</span>
<svg class="a" style="left:1427px;top:745px" width="8" height="8"><g fill="#9a9a9a"><rect x="6" y="0" width="1" height="1"/><rect x="4" y="2" width="1" height="1"/><rect x="6" y="2" width="1" height="1"/><rect x="2" y="4" width="1" height="1"/><rect x="4" y="4" width="1" height="1"/><rect x="6" y="4" width="1" height="1"/><rect x="0" y="6" width="1" height="1"/><rect x="2" y="6" width="1" height="1"/><rect x="4" y="6" width="1" height="1"/><rect x="6" y="6" width="1" height="1"/></g></svg>
<div class="a" style="left:0;top:107px;width:1px;height:652px;background:#282828"></div>
<div class="a" style="left:0;top:758px;width:1440px;height:1px;background:#262626"></div>
<div class="a" style="left:1439px;top:33px;width:1px;height:726px;background:#282828"></div>
</body></html>
